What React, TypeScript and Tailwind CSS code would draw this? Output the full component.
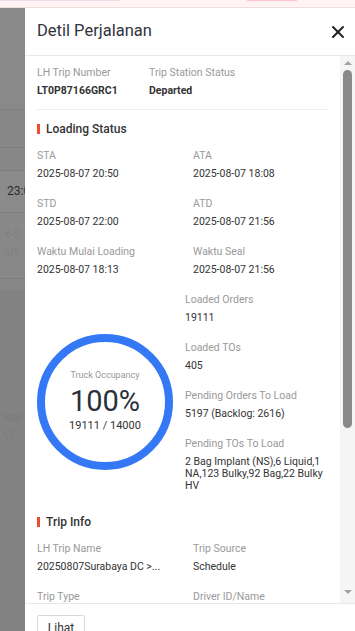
import { X } from 'lucide-react'

type Field = { label: string; value: React.ReactNode; bold?: boolean }

function Item({ label, value, bold }: Field) {
  return (
    <div className="mb-[15px]">
      <div className="whitespace-nowrap text-[10.5px] leading-[18px] text-[#999]">{label}</div>
      <div
        className={
          'mt-[3px] whitespace-nowrap text-[10.5px] leading-3 text-[#333] ' +
          (bold ? 'font-bold' : '')
        }
      >
        {value}
      </div>
    </div>
  )
}

function SectionTitle({ children }: { children: React.ReactNode }) {
  return (
    <div className="mb-[9px] flex h-[18px] items-center gap-[6px]">
      <span className="h-[10px] w-[3px] bg-[#ee4d2d]" />
      <span className="text-[12px] font-medium text-[#333]">{children}</span>
    </div>
  )
}

function OccupancyRing() {
  return (
    <div className="relative mt-[43px] size-[136px] shrink-0">
      <svg viewBox="0 0 136 136" className="absolute inset-0 size-full">
        <circle cx="68" cy="68" r="64" fill="none" stroke="#3478f6" strokeWidth="8" />
      </svg>
      <div className="flex size-full flex-col items-center justify-center pb-[4px]">
        <span className="text-[9px] leading-3 text-[#999]">Truck Occupancy</span>
        <span className="mt-[4px] text-[29px] leading-[32px] text-[#2b303a]">100%</span>
        <span className="mt-[3px] text-[11px] leading-3 text-[#333]">19111 / 14000</span>
      </div>
    </div>
  )
}

function Backdrop() {
  return (
    <div className="flex w-[25px] shrink-0 flex-col bg-[#828282]">
      <div className="h-[101px] bg-[#898989]" />
      <div className="h-[38px] border-t border-[#7e7e7e] bg-[#878787]" />
      <div className="h-[23px] border-t border-[#7e7e7e] bg-[#878787]" />
      <div className="flex h-[42px] items-end border-t border-[#7c7c7c] bg-[#8b8b8b] pb-[13px] pl-[7px] text-[12px] leading-4 text-[#2e2e2e]">
        23:0
      </div>
      <div className="h-[66px] border-t border-[#7c7c7c] bg-[#888888] pl-[4px] pt-[12px] text-[12px] leading-[18px] text-[#818181]">
        x-8
        <br />
        st\
      </div>
      <div className="h-[12px] border-t border-[#7e7e7e] bg-[#868686]" />
      <div className="flex-1 pl-[3px] pt-[118px] text-[12px] leading-[18px] text-[#7c7c7c]">
        xce
        <br />
        \1
      </div>
    </div>
  )
}

function Scrollbar() {
  return (
    <div className="flex w-[15px] shrink-0 flex-col items-center bg-[#f5f5f5] pt-[5px]">
      <span className="h-0 w-0 border-x-[4px] border-b-[4px] border-x-transparent border-b-[#a3a3a3]" />
      <div className="mt-[5px] h-[358px] w-[9px] rounded-full bg-[#8a8a8a]" />
      <div className="flex-1" />
      <span className="mb-[9px] h-0 w-0 border-x-[4px] border-t-[4px] border-x-transparent border-t-[#a3a3a3]" />
    </div>
  )
}

export default function App() {
  return (
    <div
      className="flex h-[631px] w-[355px] flex-col overflow-hidden bg-white"
      style={{ fontFamily: 'Roboto, "Liberation Sans", sans-serif' }}
    >
      <div className="relative h-[8px] shrink-0 border-b border-[#f0dcdc] bg-[#fff3f3]">
        <div className="absolute left-0 top-0 h-[1px] w-[120px] bg-[#ecdcea]" />
        <div className="absolute left-[247px] top-0 h-[1px] w-[50px] bg-[#ffc3cc]" />
      </div>
      <div className="flex min-h-0 flex-1">
        <Backdrop />
        <div className="flex min-w-0 flex-1 flex-col bg-white">
          <div className="flex h-[48px] shrink-0 items-center justify-between border-b border-[#e8e8e8] pl-[12px] pr-[7px]">
            <span className="text-[16.5px] text-[#2f343d]">Detil Perjalanan</span>
            <X className="size-[20px] text-[#222]" strokeWidth={2.4} />
          </div>
          <div className="flex min-h-0 flex-1">
            <div className="min-w-0 flex-1 overflow-hidden pl-[12px] pr-[12px] pt-[8px]">
              <div className="grid grid-cols-[112px_1fr]">
                <Item label="LH Trip Number" value="LT0P87166GRC1" bold />
                <Item label="Trip Station Status" value="Departed" bold />
              </div>
              <div className="-mt-[3px] mb-[10px] border-t border-[#ececec]" />
              <SectionTitle>Loading Status</SectionTitle>
              <div className="grid grid-cols-[156px_1fr]">
                <Item label="STA" value="2025-08-07 20:50" />
                <Item label="ATA" value="2025-08-07 18:08" />
                <Item label="STD" value="2025-08-07 22:00" />
                <Item label="ATD" value="2025-08-07 21:56" />
                <Item label="Waktu Mulai Loading" value="2025-08-07 18:13" />
                <Item label="Waktu Seal" value="2025-08-07 21:56" />
              </div>
              <div className="flex items-start gap-[12px]">
                <OccupancyRing />
                <div className="min-w-0 flex-1">
                  <Item label="Loaded Orders" value="19111" />
                  <Item label="Loaded TOs" value="405" />
                  <Item label="Pending Orders To Load" value="5197 (Backlog: 2616)" />
                  <Item
                    label="Pending TOs To Load"
                    value={
                      <>
                        2 Bag Implant (NS),6 Liquid,1
                        <br />
                        NA,123 Bulky,92 Bag,22 Bulky
                        <br />
                        HV
                      </>
                    }
                  />
                </div>
              </div>
              <div className="mt-[6px]">
                <SectionTitle>Trip Info</SectionTitle>
              </div>
              <div className="grid grid-cols-[156px_1fr]">
                <Item label="LH Trip Name" value="20250807Surabaya DC >..." />
                <Item label="Trip Source" value="Schedule" />
                <Item label="Trip Type" value="Linehaul" />
                <Item label="Driver ID/Name" value="-" />
              </div>
            </div>
            <Scrollbar />
          </div>
          <div className="h-[28px] shrink-0 border-t border-[#e8e8e8] pl-[12px] pt-[11px]">
            <div className="flex h-[26px] w-[48px] items-start justify-center rounded-[2px] border border-[#d9d9d9] pt-[4px] text-[12px] leading-4 text-[#333]">
              Lihat
            </div>
          </div>
        </div>
      </div>
    </div>
  )
}
